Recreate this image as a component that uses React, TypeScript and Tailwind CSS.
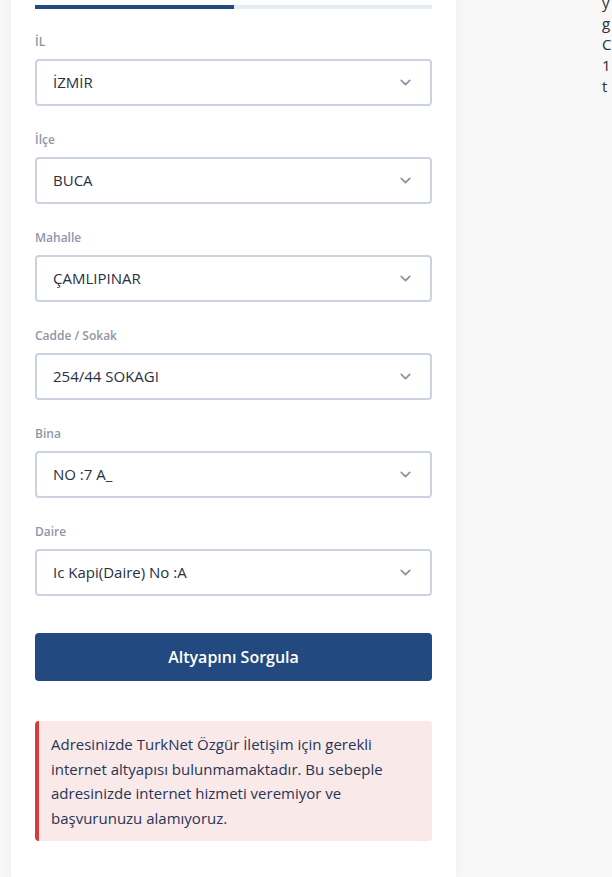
import { ChevronDown } from "lucide-react";

type Field = {
  label: string;
  value: string;
};

const fields: Field[] = [
  { label: "İL", value: "İZMİR" },
  { label: "İlçe", value: "BUCA" },
  { label: "Mahalle", value: "ÇAMLIPINAR" },
  { label: "Cadde / Sokak", value: "254/44 SOKAGI" },
  { label: "Bina", value: "NO :7 A_" },
  { label: "Daire", value: "Ic Kapi(Daire) No :A" },
];

// only the first letters of the neighbouring column peek in at the right edge
const sideLines = ["y", "g", "C", "1", "t"];

function SelectField({ label, value }: Field) {
  return (
    <div className="flex flex-col">
      <label className="h-[18px] text-[12px] font-semibold leading-[18px] text-[#8d96a8]">{label}</label>
      <div className="mt-[8px] flex h-[47px] items-center justify-between rounded-[4px] border-2 border-[#cbd2e0] bg-white pl-[16px] pr-[16px]">
        <span className="text-[15px] text-[#27303f]">{value}</span>
        <ChevronDown size={17} strokeWidth={2.4} className="text-[#8a93a5]" />
      </div>
    </div>
  );
}

export default function App() {
  return (
    <div
      className="flex h-[877px] w-[612px] overflow-hidden bg-[#f8f8f8]"
      style={{ fontFamily: '"Open Sans", "Noto Sans", sans-serif' }}
    >
      <section className="ml-[11px] w-[445px] shrink-0 bg-white px-[24px] pt-[5px] shadow-[0_0_14px_rgba(0,0,0,0.05)]">
        <div className="flex h-[4px] w-full bg-[#e6eaf1]">
          <div className="h-full w-[50%] bg-[#234a80]" />
        </div>

        <div className="mt-[24px] flex flex-col gap-[25px]">
          {fields.map((field) => (
            <SelectField key={field.label} {...field} />
          ))}
        </div>

        <button
          type="button"
          className="mt-[37px] h-[48px] w-full rounded-[4px] bg-[#234a80] text-[16px] font-semibold text-white"
        >
          Altyapını Sorgula
        </button>

        <div className="mt-[40px] rounded-[4px] border-l-4 border-[#d63b3b] bg-[#f9e9e8] py-[11px] pl-[12px] pr-[16px] text-[15px] leading-[24.5px] text-[#273556]">
          Adresinizde TurkNet Özgür İletişim için gerekli internet altyapısı bulunmamaktadır. Bu sebeple
          adresinizde internet hizmeti veremiyor ve başvurunuzu alamıyoruz.
        </div>
      </section>

      <aside className="ml-[146px] -mt-[8px] flex flex-col text-[15px] leading-[21px] text-[#2b2f36]">
        {sideLines.map((line, i) => (
          <span key={i} className="whitespace-nowrap">
            {line}
          </span>
        ))}
      </aside>
    </div>
  );
}
